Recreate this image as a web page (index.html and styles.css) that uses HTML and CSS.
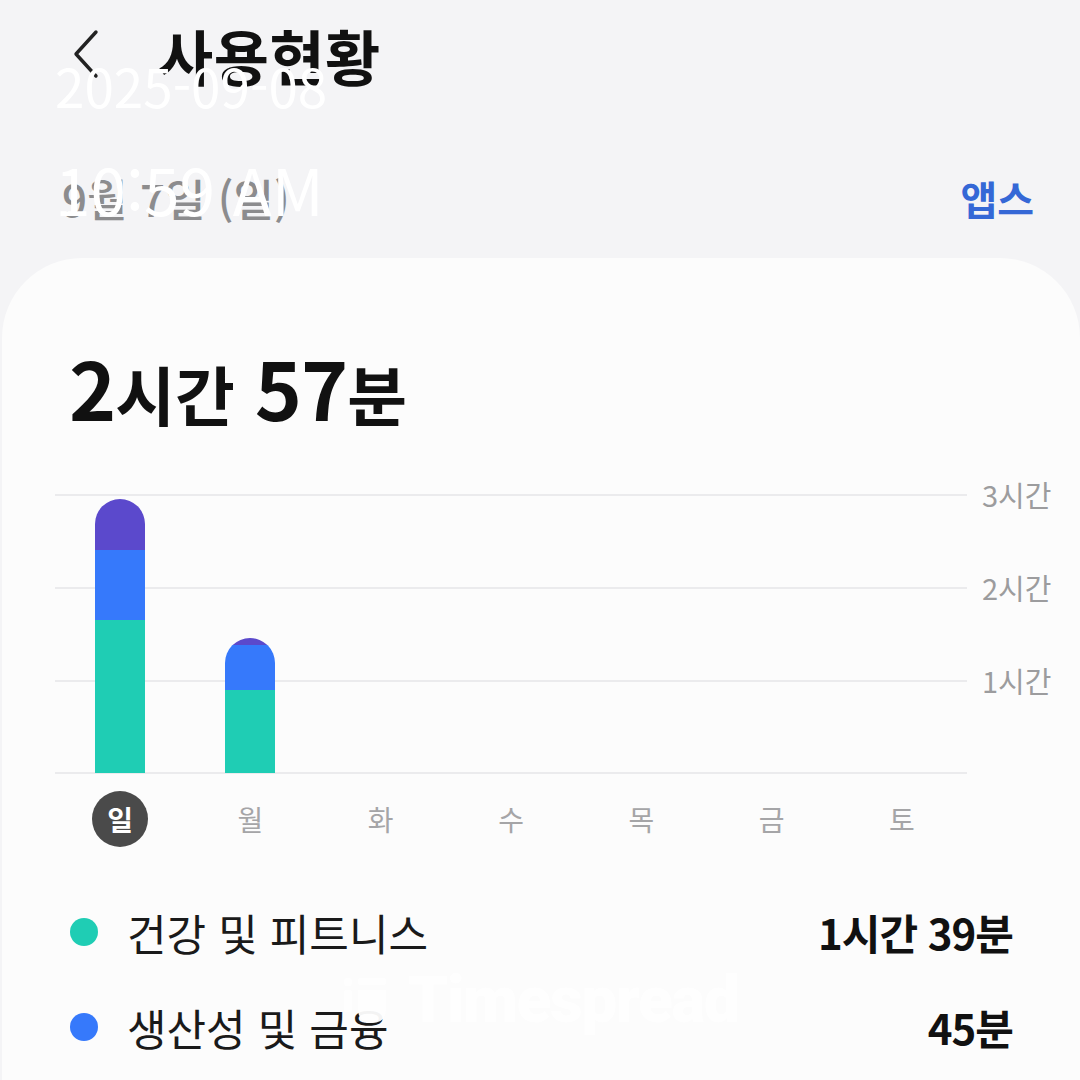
FILE: index.html
```html
<!DOCTYPE html>
<html lang="ko">
<head>
    <meta charset="UTF-8">
    <meta name="viewport" content="width=device-width, initial-scale=1.0">
    <title>사용현황</title>
    <link rel="stylesheet" href="styles.css">
</head>
<body>

    <!-- HEADER -->
    <header class="top-bar">
        <button class="back-btn" aria-label="뒤로">
            <svg width="34" height="52" viewBox="0 0 34 52">
                <path d="M26 4 L6 26 L26 48" fill="none" stroke="#222" stroke-width="3.4" stroke-linecap="round" stroke-linejoin="round"/>
            </svg>
        </button>
        <h1>사용현황</h1>
    </header>

    <div class="date-row">
        <span class="date">9월 7일 (일)</span>
        <a class="apps-link" href="#">앱스</a>
    </div>

    <!-- USAGE CARD -->
    <main class="usage-card">
        <div class="total">
            <span class="num">2</span><span class="unit">시간</span>
            <span class="num">57</span><span class="unit">분</span>
        </div>

        <div class="chart">
            <div class="plot">
                <div class="col">
                    <div class="bar">
                        <div class="seg other" style="height: 51px"></div>
                        <div class="seg prod" style="height: 70px"></div>
                        <div class="seg health" style="height: 153px"></div>
                    </div>
                </div>
                <div class="col">
                    <div class="bar">
                        <div class="seg other" style="height: 7px"></div>
                        <div class="seg prod" style="height: 45px"></div>
                        <div class="seg health" style="height: 83px"></div>
                    </div>
                </div>
                <div class="col"></div>
                <div class="col"></div>
                <div class="col"></div>
                <div class="col"></div>
                <div class="col"></div>
            </div>
            <div class="y-labels">
                <span>3시간</span>
                <span>2시간</span>
                <span>1시간</span>
            </div>
        </div>

        <div class="days">
            <span class="day active">일</span>
            <span class="day">월</span>
            <span class="day">화</span>
            <span class="day">수</span>
            <span class="day">목</span>
            <span class="day">금</span>
            <span class="day">토</span>
        </div>

        <ul class="legend">
            <li>
                <span class="dot health"></span>
                <span class="name">건강 및 피트니스</span>
                <span class="time">1시간 39분</span>
            </li>
            <li>
                <span class="dot prod"></span>
                <span class="name">생산성 및 금융</span>
                <span class="time">45분</span>
            </li>
        </ul>
    </main>

    <!-- Screenshot timestamp overlay -->
    <div class="stamp">
        <div class="stamp-date">2025-09-08</div>
        <div class="stamp-time">10:59 AM</div>
    </div>

    <!-- Watermark -->
    <div class="watermark">
        <svg width="46" height="48" viewBox="0 0 46 48">
            <circle cx="6" cy="5" r="4.5" fill="#fff"/>
            <rect x="2" y="13" width="8" height="22" rx="2" fill="#fff"/>
            <rect x="16" y="1" width="28" height="7" rx="2" fill="#fff"/>
            <path d="M16 13 H44 V32 Q44 46 30 46 Q16 46 16 32 Z" fill="#fff"/>
        </svg>
        <span>Timespread</span>
    </div>

</body>
</html>
```

FILE: styles.css
```css
/* Global Styles */
* {
    margin: 0;
    padding: 0;
    box-sizing: border-box;
    font-family: 'Noto Sans CJK KR', 'Noto Sans', sans-serif;
}

body {
    background: #f4f4f6;
    color: #111;
    width: 1080px;
    height: 1080px;
    overflow: hidden;
    position: relative;
}

/* HEADER */
.top-bar {
    display: flex;
    align-items: center;
    height: 108px;
    padding-left: 70px;
}

.back-btn {
    background: none;
    border: none;
    display: flex;
    margin-right: 54px;
}

.top-bar h1 {
    font-size: 60px;
    font-weight: 700;
    letter-spacing: 0.5px;
    color: #111;
}

/* DATE ROW */
.date-row {
    display: flex;
    justify-content: space-between;
    align-items: center;
    height: 150px;
    padding: 30px 46px 0 62px;
}

.date {
    font-size: 44px;
    font-weight: 500;
    color: #8c8c8e;
}

.apps-link {
    font-size: 40px;
    font-weight: 700;
    color: #3568d6;
    text-decoration: none;
}

/* CARD */
.usage-card {
    background: #fcfcfc;
    margin: 0 0 0 2px;
    border-radius: 80px 80px 0 0;
    height: 822px;
    padding: 82px 28px 0 53px;
}

.total {
    display: flex;
    align-items: baseline;
    padding-left: 14px;
    height: 92px;
    font-weight: 700;
}

.total .num {
    font-size: 80px;
    line-height: 92px;
    letter-spacing: -1px;
}

.total .unit {
    font-size: 65px;
    margin-right: 20px;
}

/* CHART */
.chart {
    display: flex;
    margin-top: 62px;
}

.plot {
    width: 912px;
    height: 280px;
    display: grid;
    grid-template-columns: repeat(7, 1fr);
    align-items: end;
    background:
        linear-gradient(#ebebed, #ebebed) 0 0 / 100% 2px no-repeat,
        linear-gradient(#ebebed, #ebebed) 0 93px / 100% 2px no-repeat,
        linear-gradient(#ebebed, #ebebed) 0 186px / 100% 2px no-repeat,
        linear-gradient(#ebebed, #ebebed) 0 278px / 100% 2px no-repeat;
}

.col {
    display: flex;
    justify-content: center;
}

.bar {
    width: 50px;
    display: flex;
    flex-direction: column;
    border-radius: 25px 25px 0 0;
    overflow: hidden;
    margin-bottom: 1px;
}

.seg.other { background: #5b49cc; }
.seg.prod { background: #3679fb; }
.seg.health { background: #1fcdb4; }

.y-labels {
    display: flex;
    flex-direction: column;
    padding-left: 15px;
}

.y-labels span {
    height: 93px;
    font-size: 29px;
    color: #9c9c9e;
    transform: translateY(-21px);
}

/* DAYS */
.days {
    display: grid;
    grid-template-columns: repeat(7, 130.3px);
    margin-top: 17px;
}

.day {
    justify-self: center;
    width: 56px;
    height: 56px;
    border-radius: 50%;
    display: flex;
    align-items: center;
    justify-content: center;
    font-size: 28px;
    color: #a5a5a7;
}

.day.active {
    background: #4a4a4a;
    color: #fff;
    font-weight: 700;
}

/* LEGEND */
.legend {
    list-style: none;
    margin-top: 37px;
    padding-left: 15px;
    width: 958px;
}

.legend li {
    display: flex;
    align-items: center;
    height: 95px;
}

.dot {
    width: 28px;
    height: 28px;
    border-radius: 50%;
    margin-right: 29px;
}

.dot.health { background: #1fcdb4; }
.dot.prod { background: #3679fb; }

.legend .name {
    flex: 1;
    font-size: 43px;
    color: #1a1a1a;
}

.legend .time {
    font-size: 42px;
    font-weight: 700;
    color: #111;
    letter-spacing: -1px;
}

/* OVERLAYS */
.stamp {
    position: absolute;
    left: 55px;
    top: 59px;
    color: #fff;
    font-family: 'Noto Sans', sans-serif;
    font-weight: 400;
    line-height: 1;
}

.stamp-date {
    font-size: 53px;
}

.stamp-time {
    font-size: 64px;
    margin-top: 44px;
}

.watermark {
    position: absolute;
    left: 342px;
    top: 976px;
    display: flex;
    align-items: center;
    gap: 20px;
    color: #fff;
    opacity: 0.95;
}

.watermark span {
    font-family: 'Roboto', sans-serif;
    font-size: 64px;
    font-weight: 900;
    letter-spacing: -1.5px;
    line-height: 50px;
}
```
